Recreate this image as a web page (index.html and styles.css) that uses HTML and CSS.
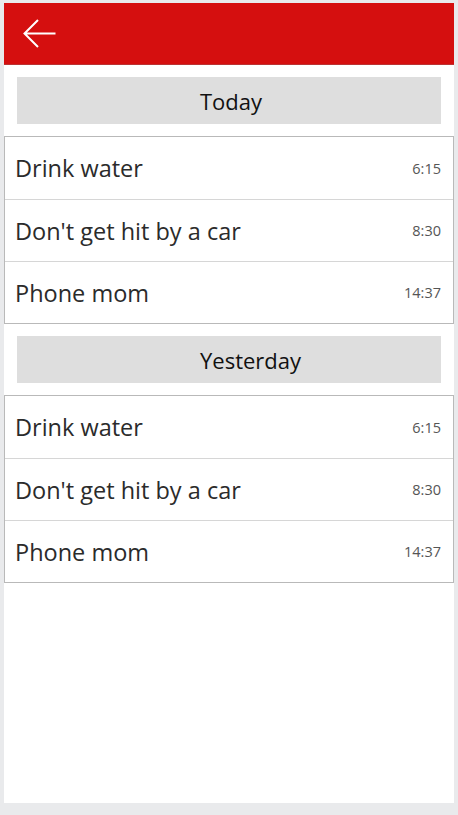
FILE: index.html
```html
<!DOCTYPE html>
<html>
<head>
<meta charset="utf-8">
<link rel="stylesheet" href="styles.css">
</head>
<body>
<div class="page">
  <header class="topbar">
    <svg class="back" width="36" height="32" viewBox="0 0 36 32">
      <path d="M33.5 15.5H2.5M16 2L2.5 15.5L16 29" fill="none" stroke="#fff" stroke-width="2"/>
    </svg>
  </header>
  <section class="group">
    <div class="group-title">Today</div>
    <ul class="list">
      <li class="row"><span class="task">Drink water</span><span class="time">6:15</span></li>
      <li class="row"><span class="task">Don't get hit by a car</span><span class="time">8:30</span></li>
      <li class="row"><span class="task">Phone mom</span><span class="time">14:37</span></li>
    </ul>
  </section>
  <section class="group">
    <div class="group-title">Yesterday</div>
    <ul class="list">
      <li class="row"><span class="task">Drink water</span><span class="time">6:15</span></li>
      <li class="row"><span class="task">Don't get hit by a car</span><span class="time">8:30</span></li>
      <li class="row"><span class="task">Phone mom</span><span class="time">14:37</span></li>
    </ul>
  </section>
</div>
</body>
</html>
```
FILE: styles.css
```css
html, body {
  margin: 0;
  padding: 0;
  background: #e9eaec;
}
body {
  padding: 3px 4px 12px 4px;
  font-family: "Open Sans", "Noto Sans", sans-serif;
}
.page {
  width: 450px;
  height: 800px;
  background: #fff;
}
.topbar {
  height: 62px;
  box-sizing: border-box;
  background: #d50f0f;
  border-bottom: 1px solid #b33;
  display: flex;
  align-items: center;
  padding-left: 18px;
}
.back {
  display: block;
}
.group {
  padding-top: 12px;
}
.group-title {
  margin: 0 13px 12px 13px;
  height: 47px;
  background: #dedede;
  display: flex;
  align-items: center;
  padding-left: 183px;
  font-size: 22px;
  color: #111;
}
.list {
  list-style: none;
  margin: 0;
  padding: 0;
  border: 1px solid #b9b9b9;
}
.row {
  height: 62px;
  box-sizing: border-box;
  display: flex;
  align-items: center;
  justify-content: space-between;
  padding: 0 12px 0 10px;
  border-top: 1px solid #d6d6d6;
}
.row:first-child {
  border-top: none;
}
.task {
  font-size: 23.5px;
  color: #2b2b2b;
}
.time {
  font-size: 14.5px;
  color: #555;
}
```
